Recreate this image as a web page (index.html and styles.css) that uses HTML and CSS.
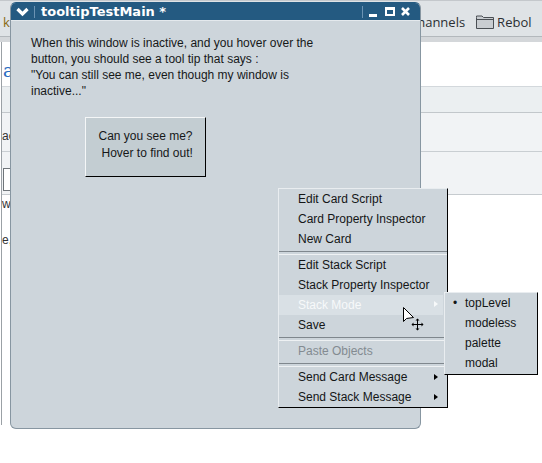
FILE: index.html
```html
<!DOCTYPE html>
<html>
<head>
<meta charset="utf-8">
<link rel="stylesheet" href="styles.css">
</head>
<body>
<div class="screen">
  <div class="browser">
    <div class="toolbar">
      <span class="bm-left">k</span>
      <div class="bm-right">
        <span class="bm">Channels</span>
        <span class="bm bm-folder"><svg class="folder" width="18" height="14" viewBox="0 0 18 14"><path d="M0.5 2.5 V1 H6 L7.5 2.5 H17.5 V13.5 H0.5 Z" fill="#c9cdd1" stroke="#4a4f54"/><path d="M0.5 4.5 H17.5" stroke="#4a4f54"/></svg>Rebol</span>
        <span class="bm bm-folder"><svg class="folder" width="18" height="14" viewBox="0 0 18 14"><path d="M0.5 2.5 V1 H6 L7.5 2.5 H17.5 V13.5 H0.5 Z" fill="#c9cdd1" stroke="#4a4f54"/></svg></span>
      </div>
    </div>
    <div class="band"></div>
    <div class="page">
      <div class="sec sec-white"><span class="link">a</span></div>
      <div class="sec sec-gray"></div>
      <div class="sec sec-light"><span class="small">ac</span></div>
      <div class="sec sec-form"><span class="inputbox"></span></div>
      <div class="sec sec-rest"><span class="small w">w</span><span class="small e">e,</span></div>
    </div>
  </div>

  <div class="window">
    <div class="titlebar">
      <svg class="chev" width="13" height="10" viewBox="0 0 13 10"><path d="M1.5 2 L6.5 7 L11.5 2" fill="none" stroke="#fff" stroke-width="3.2"/></svg>
      <span class="tsep"></span>
      <span class="title">tooltipTestMain *</span>
      <span class="tsep tsep-right"></span>
      <span class="tb-min"></span>
      <span class="tb-max"></span>
      <svg class="tb-close" width="9" height="9" viewBox="0 0 9 9"><path d="M1 1 L8 8 M8 1 L1 8" stroke="#fff" stroke-width="2.6"/></svg>
    </div>
    <div class="wbody">
      <p class="info">When this window is inactive, and you hover over the<br>button, you should see a tool tip that says :<br>"You can still see me, even though my window is<br>inactive..."</p>
      <div class="btn">Can you see me?
 Hover to find out!</div>
    </div>
  </div>

  <div class="menu">
    <div class="mi">Edit Card Script</div>
    <div class="mi">Card Property Inspector</div>
    <div class="mi">New Card</div>
    <div class="msep"></div>
    <div class="mi">Edit Stack Script</div>
    <div class="mi">Stack Property Inspector</div>
    <div class="mi mi-hl">Stack Mode<span class="arrow arrow-white"></span></div>
    <div class="mi">Save</div>
    <div class="msep"></div>
    <div class="mi mi-dis">Paste Objects</div>
    <div class="msep"></div>
    <div class="mi">Send Card Message<span class="arrow"></span></div>
    <div class="mi">Send Stack Message<span class="arrow"></span></div>
  </div>

  <div class="submenu">
    <div class="si"><span class="gut">•</span>topLevel</div>
    <div class="si"><span class="gut"></span>modeless</div>
    <div class="si"><span class="gut"></span>palette</div>
    <div class="si"><span class="gut"></span>modal</div>
  </div>

  <svg class="cursor" width="26" height="26" viewBox="0 0 26 26">
    <path d="M1.5 1.5 L1.5 15.5 L4.5 12.5 L11.5 11.5 Z" fill="#fff" stroke="#000" stroke-width="1"/>
    <path d="M10 18.5 H21 M15.5 13 V24" stroke="#000" stroke-width="1"/>
    <path d="M15.5 12.5 L13.5 14.5 H17.5 Z M15.5 24.5 L13.5 22.5 H17.5 Z M9.5 18.5 L11.5 16.5 V20.5 Z M21.5 18.5 L19.5 16.5 V20.5 Z" fill="#000"/>
  </svg>
</div>
</body>
</html>
```

FILE: styles.css
```css
html, body {
  margin: 0;
  padding: 0;
  background: #ffffff;
}

.screen {
  position: relative;
  width: 542px;
  height: 463px;
  overflow: hidden;
  font-family: "Liberation Sans", Arial, sans-serif;
}

/* ---------- background browser ---------- */
.browser {
  width: 542px;
  height: 463px;
  display: flex;
  flex-direction: column;
  background: #ffffff;
}

.toolbar {
  box-sizing: border-box;
  height: 37px;
  border-top: 1px solid #c4c8cc;
  border-bottom: 1px solid #b3b8bc;
  background: #dfe3e6;
  display: grid;
  grid-template-columns: 409px 1fr;
  align-items: center;
  padding-top: 6px;
  font-family: "Open Sans", "Noto Sans", sans-serif;
  font-size: 13px;
  color: #2b2f33;
}

.bm-left {
  padding-left: 3px;
  color: #8a6a10;
}

.bm-right {
  display: flex;
  align-items: center;
  white-space: nowrap;
}

.bm {
  display: flex;
  align-items: center;
  margin-right: 11px;
}

.folder {
  margin-right: 3px;
  flex: none;
}

.band {
  height: 5px;
  background: #d4d7da;
}

.page {
  flex: 1;
  margin-left: 1px;
  margin-bottom: 38px;
  border-left: 1px solid #9ba1a6;
  display: flex;
  flex-direction: column;
}

.sec {
  position: relative;
  font-size: 12px;
  color: #333;
}

.sec-white {
  height: 44px;
  background: #ffffff;
}

.link {
  display: block;
  padding: 20px 0 0 1px;
  font-family: "DejaVu Serif", serif;
  font-size: 18px;
  line-height: 18px;
  color: #2a6cc0;
}

.sec-gray {
  height: 25px;
  background: #ebeff1;
  border-top: 1px solid #d3d8dc;
  border-bottom: 1px solid #c2c7cb;
}

.sec-light {
  height: 38px;
  background: #f1f3f5;
  border-bottom: 1px solid #c9ced2;
}

.small {
  display: block;
  padding: 16px 0 0 0;
  font-size: 12px;
  line-height: 14px;
}

.sec-form {
  height: 42px;
  background: #f1f3f5;
  border-bottom: 1px solid #c6cbcf;
}

.inputbox {
  display: block;
  margin: 16px 0 0 1px;
  width: 12px;
  height: 21px;
  border: 1px solid #6f757a;
  background: #fff;
}

.sec-rest {
  flex: 1;
  background: #ffffff;
}

.sec-rest .w {
  padding-top: 2px;
}

.sec-rest .e {
  padding-top: 22px;
}

/* ---------- main window ---------- */
.window {
  position: absolute;
  left: 10px;
  top: 2px;
  width: 411px;
  height: 427px;
  box-sizing: border-box;
  border: 1px solid #8796a1;
  border-top-color: #245a81;
  border-radius: 6px;
  background: #cdd5db;
  overflow: hidden;
  display: flex;
  flex-direction: column;
}

.titlebar {
  height: 17px;
  flex: none;
  background: #245a81;
  border-bottom: 1px solid #e4e9ed;
  display: flex;
  align-items: center;
  padding: 0 10px 0 5px;
  color: #ffffff;
}

.chev {
  flex: none;
}

.tsep {
  width: 1px;
  height: 12px;
  background: #6b93b3;
  margin-left: 5px;
  flex: none;
}

.title {
  margin-left: 6px;
  font-family: "DejaVu Sans", sans-serif;
  font-weight: bold;
  font-size: 13px;
  line-height: 17px;
  flex: 1;
  white-space: nowrap;
}

.tsep-right {
  margin-left: 0;
  margin-right: 6px;
}

.tb-min {
  width: 8px;
  height: 3px;
  background: #fff;
  margin-top: 8px;
  margin-right: 8px;
  flex: none;
}

.tb-max {
  box-sizing: border-box;
  width: 10px;
  height: 9px;
  border: 2px solid #fff;
  border-top-width: 3px;
  margin-right: 6px;
  flex: none;
}

.tb-close {
  flex: none;
}

.wbody {
  flex: 1;
  padding: 14px 20px 0 20px;
}

.info {
  margin: 0;
  font-size: 12px;
  line-height: 16px;
  color: #161819;
}

.btn {
  box-sizing: border-box;
  margin: 18px 0 0 54px;
  width: 121px;
  height: 60px;
  border: 1px solid #000;
  border-top-color: #f4f6f7;
  border-left-color: #f4f6f7;
  background: #c3cdd2;
  white-space: pre;
  text-align: center;
  font-size: 12px;
  line-height: 17px;
  color: #161819;
  padding-top: 10px;
}

/* ---------- context menu ---------- */
.menu {
  position: absolute;
  left: 278px;
  top: 188px;
  width: 170px;
  height: 220px;
  box-sizing: border-box;
  background: #cdd5db;
  border: 1px solid #000;
  border-top-color: #e9edf0;
  border-left-color: #e9edf0;
  font-size: 12px;
  color: #141617;
}

.mi {
  position: relative;
  height: 20px;
  line-height: 20px;
  padding-left: 19px;
  white-space: nowrap;
}

.mi-hl {
  background: #d9e0e5;
  color: #f7f9fa;
  margin-right: 4px;
}

.mi-dis {
  color: #838b91;
}

.msep {
  height: 6px;
  box-sizing: border-box;
  border-bottom: 1px solid #eef1f3;
  position: relative;
}

.msep::before {
  content: "";
  position: absolute;
  left: 0;
  right: 0;
  top: 2px;
  height: 1px;
  background: #7f878d;
}

.arrow {
  position: absolute;
  left: 155px;
  top: 7px;
  width: 0;
  height: 0;
  border-top: 3.5px solid transparent;
  border-bottom: 3.5px solid transparent;
  border-left: 4px solid #000;
}

.arrow-white {
  border-left-color: #f7f9fa;
  top: 6px;
}

/* ---------- submenu ---------- */
.submenu {
  position: absolute;
  left: 444px;
  top: 292px;
  width: 94px;
  height: 83px;
  box-sizing: border-box;
  background: #cdd5db;
  border: 1px solid #000;
  border-top-color: #e9edf0;
  border-left-color: #e9edf0;
  font-size: 12px;
  color: #141617;
}

.si {
  height: 20px;
  line-height: 20px;
  display: flex;
  white-space: nowrap;
}

.gut {
  width: 20px;
  flex: none;
  text-align: center;
}

/* ---------- cursor ---------- */
.cursor {
  position: absolute;
  left: 402px;
  top: 306px;
}
```
